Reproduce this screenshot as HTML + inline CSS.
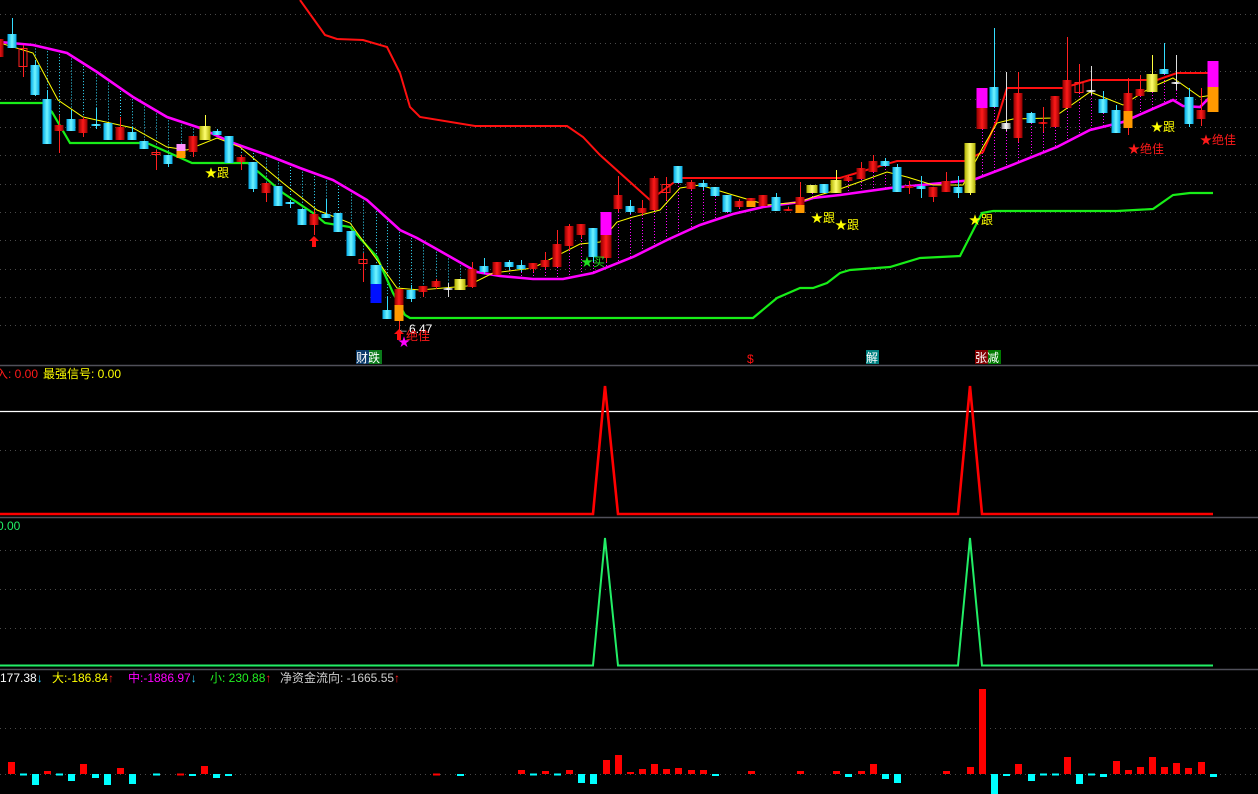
<!DOCTYPE html>
<html><head><meta charset="utf-8">
<style>
html,body{margin:0;padding:0;background:#000;width:1258px;height:794px;overflow:hidden}
svg{display:block}
text{font-family:"Liberation Sans","Noto Sans CJK SC",sans-serif;font-size:12px}
</style></head>
<body>
<svg id="s" width="1258" height="794" viewBox="0 0 1258 794" xmlns="http://www.w3.org/2000/svg">
<defs>
<linearGradient id="gr" x1="0" x2="1" y1="0" y2="0"><stop offset="0" stop-color="#900000"/><stop offset=".5" stop-color="#ff1a1a"/><stop offset="1" stop-color="#900000"/></linearGradient>
<linearGradient id="gc" x1="0" x2="1" y1="0" y2="0"><stop offset="0" stop-color="#00a8e8"/><stop offset=".5" stop-color="#70f4ff"/><stop offset="1" stop-color="#00a8e8"/></linearGradient>
<linearGradient id="gy" x1="0" x2="1" y1="0" y2="0"><stop offset="0" stop-color="#b0b000"/><stop offset=".5" stop-color="#ffff70"/><stop offset="1" stop-color="#b0b000"/></linearGradient>
<linearGradient id="gw" x1="0" x2="1" y1="0" y2="0"><stop offset="0" stop-color="#888"/><stop offset=".5" stop-color="#fff"/><stop offset="1" stop-color="#888"/></linearGradient>
</defs>
<rect width="1258" height="794" fill="#000"/>
<g stroke="#4a4a4a" stroke-width="1" stroke-dasharray="1 4">
<line x1="0" x2="1258" y1="14.5" y2="14.5"/><line x1="0" x2="1258" y1="43.5" y2="43.5"/><line x1="0" x2="1258" y1="71.5" y2="71.5"/><line x1="0" x2="1258" y1="99.5" y2="99.5"/><line x1="0" x2="1258" y1="127.5" y2="127.5"/><line x1="0" x2="1258" y1="155.5" y2="155.5"/><line x1="0" x2="1258" y1="184.5" y2="184.5"/><line x1="0" x2="1258" y1="212.5" y2="212.5"/><line x1="0" x2="1258" y1="240.5" y2="240.5"/><line x1="0" x2="1258" y1="269.5" y2="269.5"/><line x1="0" x2="1258" y1="297.5" y2="297.5"/><line x1="0" x2="1258" y1="325.5" y2="325.5"/>
<line x1="0" x2="1258" y1="450.5" y2="450.5"/>
<line x1="0" x2="1258" y1="550.5" y2="550.5"/><line x1="0" x2="1258" y1="589.5" y2="589.5"/><line x1="0" x2="1258" y1="628.5" y2="628.5"/>
<line x1="0" x2="1258" y1="728.5" y2="728.5"/><line x1="0" x2="1258" y1="774.5" y2="774.5"/>
</g>
<g stroke="#50505a" stroke-width="1.5">
<line x1="0" x2="1258" y1="365.5" y2="365.5"/><line x1="0" x2="1258" y1="517.5" y2="517.5"/><line x1="0" x2="1258" y1="669.5" y2="669.5"/>
</g>
<g id="conn"></g>
<polyline fill="none" stroke="#ff1010" stroke-width="2" points="300,0 325,35 337,39 363,40 387,47 400,73 410,107 420,117 475,126 567,126 583,137 600,155 650,200 680,178 840,178 897,161 965,161 983,152 997,120 1007,88 1063,88 1090,80 1157,80 1177,73 1213,73"/>
<polyline fill="none" stroke="#18ee18" stroke-width="2.2" points="0,103 43,103 52,112 70,143 147,143 192,163 248,163 283,193 313,213 325,223 350,227 377,257 393,293 405,315 410,318 753,318 777,298 800,288 813,288 827,283 840,273 850,270 890,267 920,258 960,256 982,213 993,211 1117,211 1153,209 1173,195 1190,193 1213,193"/>
<polyline id="ma" fill="none" stroke="#ff00ff" stroke-width="2.6" points="0,42 33,45 67,53 97,72 133,97 167,117 200,128 233,143 267,155 300,168 333,180 367,200 400,230 417,238 433,247 477,272 500,276 533,279 563,279 593,273 633,257 667,240 700,225 733,214 763,207 800,202 813,198 840,195 890,188 973,180 1007,167 1057,147 1090,130 1123,122 1173,100 1183,106 1200,107 1213,94"/>
<polyline fill="none" stroke="#ffff00" stroke-width="1" points="0,43 33,53 58,100 83,117 133,128 167,147 187,150 217,138 240,147 283,183 317,210 350,223 377,260 397,288 420,290 467,286 493,273 533,268 580,244 600,242 617,222 633,217 660,210 680,188 700,185 733,195 767,205 800,202 813,197 840,189 887,172 907,177 933,185 963,185 983,147 997,123 1013,119 1053,118 1090,92 1123,105 1150,88 1173,78 1200,97 1213,95"/>
<g id="cd"></g>
<!-- markers -->
<text x="205" y="177" fill="#ffff00">★跟</text>
<text x="811" y="222" fill="#ffff00">★跟</text>
<text x="835" y="229" fill="#ffff00">★跟</text>
<text x="969" y="224" fill="#ffff00">★跟</text>
<text x="1151" y="131" fill="#ffff00">★跟</text>
<text x="1128" y="153" fill="#ff1a1a" font-size="13">★绝佳</text>
<text x="1200" y="144" fill="#ff1a1a" font-size="13">★绝佳</text>
<text x="581" y="266" fill="#22dd22">★买</text>
<text x="397" y="333" fill="#ffffff">←6.47</text>
<text x="406" y="340" fill="#ff1a1a" font-size="13">绝佳</text>
<text x="398" y="346" fill="#ff00ff" font-size="10">★</text>
<path d="M314,236 l-5,5 h3 v6 h4 v-6 h3 z" fill="#ff1010"/>
<path d="M399,329 l-5,5 h3 v6 h4 v-6 h3 z" fill="#ff1010"/>
<rect x="356" y="350" width="13" height="14" fill="#0a3a6a"/><rect x="369" y="350" width="13" height="14" fill="#0a7a1a"/>
<text x="356" y="362" fill="#fff">财跌</text>
<text x="747" y="363" fill="#ff1010" font-size="12">$</text>
<rect x="866" y="350" width="13" height="14" fill="#008080"/><text x="866" y="362" fill="#fff">解</text>
<rect x="975" y="350" width="13" height="14" fill="#800000"/><rect x="988" y="350" width="13" height="14" fill="#007a00"/>
<text x="975" y="362" fill="#fff">张减</text>
<!-- panel 2 -->
<text x="-4" y="378" fill="#ff1a1a">入: 0.00</text>
<text x="43" y="378" fill="#ffff00">最强信号: 0.00</text>
<line x1="0" x2="1258" y1="411.5" y2="411.5" stroke="#fff" stroke-width="1.2"/>
<polyline fill="none" stroke="#ff0000" stroke-width="2.6" points="0,514 593,514 605,386 618,514 958,514 970,386 982,514 1213,514"/>
<!-- panel 3 -->
<text x="-3" y="530" fill="#22ee66">0.00</text>
<polyline fill="none" stroke="#22ee66" stroke-width="2" points="0,665.5 593,665.5 605,538 618,665.5 958,665.5 970,538 982,665.5 1213,665.5"/>
<!-- panel 4 -->
<text x="0" y="682" fill="#fff">177.38<tspan fill="#33ccff">↓</tspan></text>
<text x="52" y="682" fill="#ffff00">大:-186.84<tspan fill="#ff2020">↑</tspan></text>
<text x="128" y="682" fill="#ff00ff">中:-1886.97<tspan fill="#33ccff">↓</tspan></text>
<text x="210" y="682" fill="#22ee22">小: 230.88<tspan fill="#ff2020">↑</tspan></text>
<text x="280" y="682" fill="#cccccc">净资金流向: -1665.55<tspan fill="#ff2020">↑</tspan></text>
<g id="bars"></g>
</svg>
<script>
var C=[[-1,39,57,39,57,'r'],[12,34,48,18,48,'c'],[23,48,67,45,77,'rh'],[35,65,95,60,96,'c'],[47,99,144,90,144,'c'],[59,125,131,115,153,'r'],[71,119,131,110,131,'c'],[83,119,133,117,137,'r'],[96,124,126,108,129,'c'],[108,123,140,123,140,'c'],[120,127,140,117,140,'r'],[132,132,140,127,140,'c'],[144,141,149,141,149,'c'],[156,152,155,150,170,'rh'],[168,155,164,155,167,'c'],[181,144,158,144,158,'po',151],[193,136,152,136,157,'r'],[205,126,140,115,140,'y'],[217,131,135,129,135,'c'],[229,136,163,136,163,'c'],[241,157,162,155,170,'r'],[253,162,189,162,192,'c'],[266,183,193,183,202,'r'],[278,186,206,186,206,'c'],[290,202,204,200,208,'c'],[302,209,225,209,225,'c'],[314,214,225,210,235,'r'],[326,214,218,199,218,'c'],[338,213,232,213,232,'c'],[351,231,256,231,256,'c'],[363,259,264,253,282,'rh'],[376,265,303,265,303,'cb',284],[387,310,319,297,319,'c'],[399,289,321,289,330,'ro',305],
[411,290,299,285,302,'c'],[423,286,292,286,297,'r'],[436,281,287,279,289,'r'],[448,288,290,283,297,'w'],[460,279,290,279,290,'y'],[472,269,287,262,288,'r'],[484,266,272,258,274,'c'],[497,262,275,262,275,'r'],[509,262,267,260,270,'c'],[521,265,269,260,272,'c'],[533,263,269,263,272,'r'],[545,260,267,252,269,'r'],[557,244,267,230,267,'r'],[569,226,246,224,250,'r'],[581,224,235,224,238,'r'],[593,228,257,228,262,'c'],[606,212,258,212,262,'mr',235],[618,195,209,176,212,'r'],[630,206,212,200,214,'c'],[642,208,213,200,215,'r'],[654,178,210,176,210,'r'],[666,184,193,177,200,'rh'],[678,166,183,166,183,'c'],[691,182,189,180,190,'r'],[703,183,187,180,190,'c'],[715,187,196,187,196,'c'],[727,195,212,195,212,'c'],[739,201,207,199,208,'r'],[751,198,207,198,207,'ro',201],[763,195,206,195,206,'r'],[776,197,211,193,211,'c'],[788,209,211,207,211,'r'],[800,197,213,182,213,'ro',205],[812,185,193,185,193,'y'],[824,184,193,184,193,'c'],[836,180,193,170,193,'y'],
[848,177,181,175,181,'r'],[861,168,179,162,179,'r'],[873,161,172,155,172,'r'],[885,161,166,158,166,'c'],[897,167,192,164,192,'c'],[909,186,188,181,194,'r'],[921,186,189,176,198,'c'],[933,187,197,187,202,'r'],[946,181,192,172,192,'r'],[958,187,193,176,198,'c'],[970,143,193,143,195,'y'],[982,88,129,88,129,'mr',108],[994,87,107,28,107,'c'],[1006,123,129,72,131,'w'],[1018,93,138,72,142,'r'],[1031,113,123,112,123,'c'],[1043,122,124,107,132,'r'],[1055,96,127,96,127,'r'],[1067,80,108,37,108,'r'],[1079,82,93,64,93,'rh'],[1091,90,92,66,95,'w'],[1103,99,113,91,113,'c'],[1116,110,133,105,133,'c'],[1128,93,128,78,135,'ro',111],[1140,89,96,75,96,'r'],[1152,74,92,55,92,'y'],[1164,69,74,43,74,'c'],[1176,82,84,55,90,'w'],[1189,97,124,88,127,'c'],[1201,110,119,88,126,'r'],[1213,61,112,61,112,'mo',87]];
var ma=document.getElementById('ma').getAttribute('points').trim().split(/\s+/).map(function(p){return p.split(',').map(Number)});
function maY(x){for(var i=1;i<ma.length;i++){if(x<=ma[i][0]){var a=ma[i-1],b=ma[i];return a[1]+(b[1]-a[1])*(x-a[0])/(b[0]-a[0]);}}return ma[ma.length-1][1];}
var h='',cn='';
var wc={r:'#ff2020',rh:'#ff2020',c:'#33ddff',y:'#ffff40',w:'#dddddd',po:'#ff80ff',cb:'#33ddff',ro:'#ff2020',mr:'#ff2020',mo:'#ff00ff'};
C.forEach(function(c){var x=c[0],t=c[1],b=c[2],hi=c[3],lo=c[4],k=c[5],s=c[6];var w=(k=='y'||k=='mr'||k=='mo'||k=='cb')?11:9;var l=x-w/2;
 var m=maY(x);
 if(x>30){if(m<hi-3)cn+='<line x1="'+(x+.5)+'" x2="'+(x+.5)+'" y1="'+m+'" y2="'+hi+'" stroke="#33ddff" stroke-dasharray="1 2"/>';
 else if(m>lo+3)cn+='<line x1="'+(x+.5)+'" x2="'+(x+.5)+'" y1="'+lo+'" y2="'+m+'" stroke="#ff00ff" stroke-dasharray="1 2"/>';}
 h+='<line x1="'+(x+.5)+'" x2="'+(x+.5)+'" y1="'+hi+'" y2="'+lo+'" stroke="'+wc[k]+'"/>';
 var bh=Math.max(b-t,2);
 function r(y,hh,f){h+='<rect x="'+l+'" y="'+y+'" width="'+w+'" height="'+Math.max(hh,2)+'" fill="'+f+'"/>';}
 if(k=='r')r(t,bh,'url(#gr)');
 else if(k=='c')r(t,bh,'url(#gc)');
 else if(k=='y')r(t,bh,'url(#gy)');
 else if(k=='w')r(t,bh,'url(#gw)');
 else if(k=='rh'){h+='<rect x="'+(l+.5)+'" y="'+(t+.5)+'" width="'+(w-1)+'" height="'+Math.max(b-t-1,1)+'" fill="none" stroke="#ff2020"/>';}
 else if(k=='po'){r(t,s-t,'#ff90ff');r(s,b-s,'#ff9900');}
 else if(k=='cb'){r(t,s-t,'url(#gc)');r(s,b-s,'#0010ff');}
 else if(k=='ro'){r(t,s-t,'url(#gr)');r(s,b-s,'#ff9900');}
 else if(k=='mr'){r(t,s-t,'#ff00ff');r(s,b-s,'url(#gr)');}
 else if(k=='mo'){r(t,s-t,'#ff00ff');r(s,b-s,'#ff9900');}
});
document.getElementById('cd').innerHTML=h;
document.getElementById('conn').innerHTML=cn;
var B=[[8,762,'r'],[20,775,'c'],[32,785,'c'],[44,771,'r'],[56,775,'c'],[68,781,'c'],[80,764,'r'],[92,778,'c'],[104,785,'c'],[117,768,'r'],[129,784,'c'],[153,775,'c'],[177,773,'r'],[189,776,'c'],[201,766,'r'],[213,778,'c'],[225,776,'c'],[433,773,'r'],[457,776,'c'],[518,770,'r'],[530,775,'c'],[542,771,'r'],[554,775,'c'],[566,770,'r'],[578,783,'c'],[590,784,'c'],[603,760,'r'],[615,755,'r'],[627,772,'r'],[639,769,'r'],[651,764,'r'],[663,769,'r'],[675,768,'r'],[688,770,'r'],[700,770,'r'],[712,776,'c'],[748,771,'r'],[797,771,'r'],[833,771,'r'],[845,777,'c'],[858,771,'r'],[870,764,'r'],[882,779,'c'],[894,783,'c'],[943,771,'r'],[967,767,'r'],[979,689,'r'],[991,794,'c'],[1003,776,'c'],[1015,764,'r'],[1028,781,'c'],[1040,775,'c'],[1052,775,'c'],[1064,757,'r'],[1076,784,'c'],[1088,775,'c'],[1100,777,'c'],[1113,761,'r'],[1125,770,'r'],[1137,767,'r'],[1149,757,'r'],[1161,767,'r'],[1173,763,'r'],[1185,768,'r'],[1198,762,'r'],[1210,777,'c']];
var bb='',base=774;
B.forEach(function(q){var y1=Math.min(q[1],base),y2=Math.max(q[1],base);if(y2-y1<1.5){y1=base-.5;y2=base+1.5;}bb+='<rect x="'+q[0]+'" y="'+y1+'" width="7" height="'+(y2-y1)+'" fill="'+(q[2]=='r'?'#ff0000':'#00ffff')+'"/>';});
document.getElementById('bars').innerHTML=bb;
</script>
</body></html>
